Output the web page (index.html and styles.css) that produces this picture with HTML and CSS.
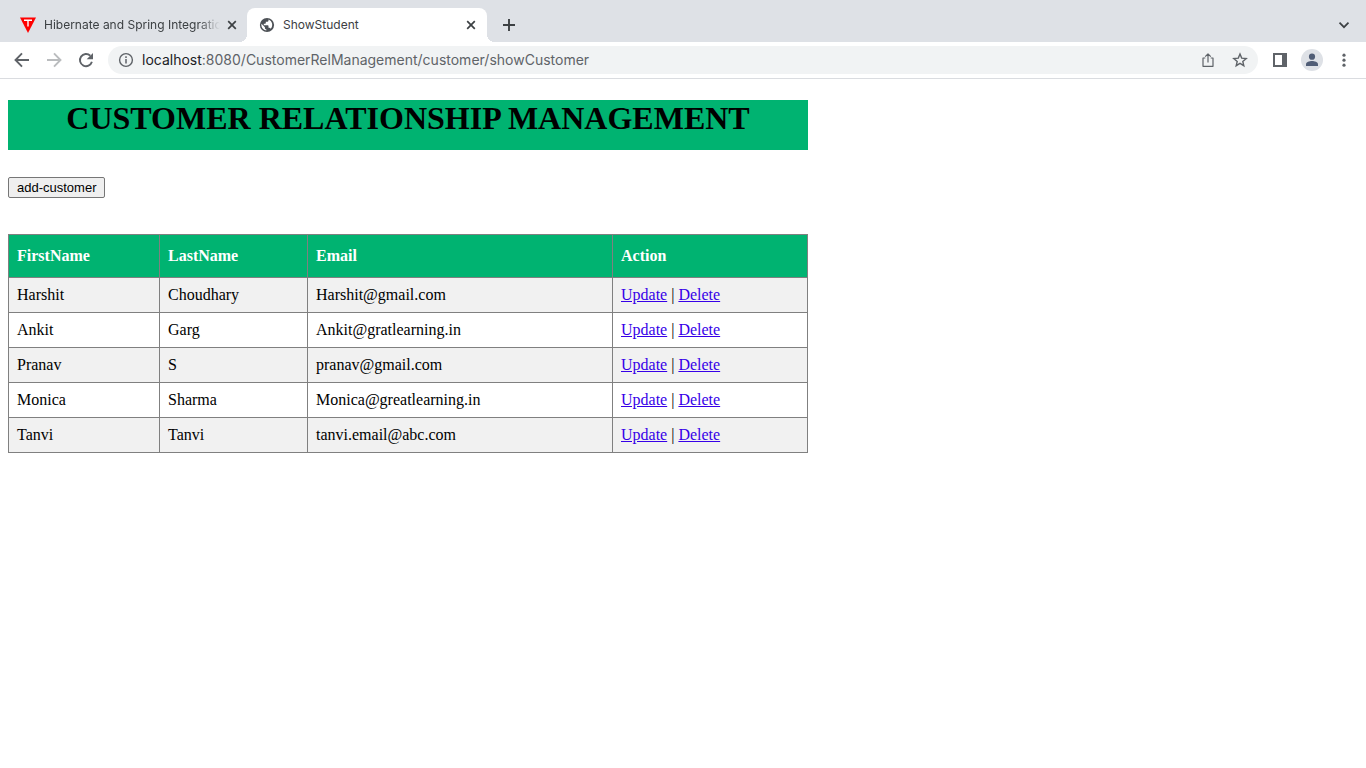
FILE: index.html
```html
<!DOCTYPE html>
<html lang="en">
<head>
<meta charset="utf-8">
<title>ShowStudent</title>
<link rel="stylesheet" href="styles.css">
</head>
<body>
<header class="browser">
  <div class="tabstrip">
    <div class="tab">
      <svg class="favicon" viewBox="0 0 16 16" width="16" height="16"><path d="M0 .5h16L8 16z" fill="#ff0000"/><path d="M4 3.200h8M8 3.200v6.300" stroke="#fff" stroke-width="1.400" fill="none"/></svg>
      <span class="tab-title tab-title-faded">Hibernate and Spring Integration</span>
      <button class="icon-button tab-close" aria-label="Close tab"><svg viewBox="0 0 16 16" width="16" height="16"><path d="M4.200 4.200l7.600 7.600M11.800 4.200l-7.600 7.600" stroke="#3c4043" stroke-width="1.700"/></svg></button>
    </div>
    <div class="tab tab-active">
      <svg class="favicon" viewBox="0 0 16 16" width="16" height="16"><circle cx="8" cy="8" r="7.100" fill="#4d5156"/><path d="M9.500 2.500v.9c0 .8-.7 1.400-1.500 1.400H6.800v1.300c0 .4-.3.700-.7.700H4.800v1.400h4c.4 0 .7.300.7.700v1.900h.7c.7 0 1.200.4 1.400 1A5.700 5.700 0 0 0 9.500 2.500zM7.300 13.600v-1.300c-.8 0-1.400-.6-1.400-1.400v-.7L2.500 6.800A5.700 5.700 0 0 0 7.300 13.600z" fill="#fff"/></svg>
      <span class="tab-title">ShowStudent</span>
      <button class="icon-button tab-close" aria-label="Close tab"><svg viewBox="0 0 16 16" width="16" height="16"><path d="M4.200 4.200l7.600 7.600M11.800 4.200l-7.600 7.600" stroke="#3c4043" stroke-width="1.700"/></svg></button>
    </div>
    <button class="icon-button new-tab" aria-label="New tab"><svg viewBox="0 0 16 16" width="16" height="16"><path d="M8 2v12M2 8h12" stroke="#3c4043" stroke-width="1.900"/></svg></button>
    <button class="icon-button tab-search" aria-label="Search tabs"><svg viewBox="0 0 16 16" width="16" height="16"><path d="M3.500 5.700L8 10.200l4.500-4.500" stroke="#3c4043" stroke-width="1.700" fill="none"/></svg></button>
  </div>
  <div class="toolbar">
    <div class="nav">
      <button class="icon-button" aria-label="Back"><svg viewBox="0 0 16 16" width="16" height="16"><path d="M15 8H2M8 1.300L1.500 8 8 14.700" stroke="#5f6368" stroke-width="1.900" fill="none"/></svg></button>
      <button class="icon-button" aria-label="Forward"><svg viewBox="0 0 16 16" width="16" height="16"><path d="M1 8h13M8 1.300L14.500 8 8 14.700" stroke="#babcbe" stroke-width="1.900" fill="none"/></svg></button>
      <button class="icon-button" aria-label="Reload"><svg viewBox="0 0 16 16" width="16" height="16"><path d="M13.900 9.800A6.100 6.100 0 1 1 12.300 3.700" stroke="#5f6368" stroke-width="1.900" fill="none"/><path d="M15 1v6.300H8.700z" fill="#5f6368"/></svg></button>
    </div>
    <div class="omnibox">
      <button class="icon-button" aria-label="Site information"><svg viewBox="0 0 16 16" width="16" height="16"><circle cx="8" cy="8" r="6.400" stroke="#5f6368" stroke-width="1.400" fill="none"/><path d="M8 7v4.500M8 4.300v1.600" stroke="#5f6368" stroke-width="1.500"/></svg></button>
      <span class="url"><span class="url-host">localhost</span>:8080/CustomerRelManagement/customer/showCustomer</span>
      <button class="icon-button" aria-label="Share"><svg viewBox="0 0 16 16" width="16" height="16"><path d="M5.300 6H3v8.300h10V6h-2.300M8 10.500V2M5.200 4.700L8 1.900l2.800 2.800" stroke="#5f6368" stroke-width="1.200" fill="none" stroke-linejoin="round"/></svg></button>
      <button class="icon-button" aria-label="Bookmark"><svg viewBox="0 0 16 16" width="16" height="16"><path d="M8 2l1.700 4.100 4.500.4-3.400 2.900 1 4.300L8 11.400l-3.800 2.300 1-4.300-3.400-2.900 4.500-.4z" stroke="#5f6368" stroke-width="1.400" fill="none"/></svg></button>
    </div>
    <div class="actions">
      <button class="icon-button" aria-label="Side panel"><svg viewBox="0 0 16 16" width="16" height="16"><path fill-rule="evenodd" d="M1 1h14v14H1zM3 3v10h7V3z" fill="#5f6368"/></svg></button>
      <button class="icon-button profile" aria-label="Profile"><svg viewBox="0 0 16 16" width="16" height="16"><circle cx="8" cy="4.700" r="3.100" fill="#505d76"/><path d="M2 14v-1.800C2 10 5.500 9 8 9s6 1 6 3.200V14z" fill="#505d76"/></svg></button>
      <button class="icon-button" aria-label="Menu"><svg viewBox="0 0 16 16" width="16" height="16"><g fill="#5f6368"><circle cx="8" cy="3.200" r="1.600"/><circle cx="8" cy="8.200" r="1.600"/><circle cx="8" cy="13.200" r="1.600"/></g></svg></button>
    </div>
  </div>
</header>
<main class="page">
  <h1 class="banner">CUSTOMER RELATIONSHIP MANAGEMENT</h1>
  <button class="add-button">add-customer</button>
  <table class="customers">
    <colgroup><col class="col-first"><col class="col-last"><col class="col-email"><col></colgroup>
    <thead><tr><th scope="col">FirstName</th><th scope="col">LastName</th><th scope="col">Email</th><th scope="col">Action</th></tr></thead>
    <tbody>
      <tr><td>Harshit</td><td>Choudhary</td><td>Harshit@gmail.com</td><td><a href="#">Update</a> | <a href="#">Delete</a></td></tr>
      <tr><td>Ankit</td><td>Garg</td><td>Ankit@gratlearning.in</td><td><a href="#">Update</a> | <a href="#">Delete</a></td></tr>
      <tr><td>Pranav</td><td>S</td><td>pranav@gmail.com</td><td><a href="#">Update</a> | <a href="#">Delete</a></td></tr>
      <tr><td>Monica</td><td>Sharma</td><td>Monica@greatlearning.in</td><td><a href="#">Update</a> | <a href="#">Delete</a></td></tr>
      <tr><td>Tanvi</td><td>Tanvi</td><td>tanvi.email@abc.com</td><td><a href="#">Update</a> | <a href="#">Delete</a></td></tr>
    </tbody>
  </table>
</main>
</body>
</html>
```
FILE: styles.css
```css
* { box-sizing: border-box; }
body { margin: 0; background: #fff; color: #000; font: 16px/18px "Liberation Serif", "Times New Roman", serif; }
.browser { border-bottom: 1px solid #dadce0; font-family: Inter, Roboto, sans-serif; }
.icon-button { display: flex; flex: none; align-items: center; justify-content: center; width: 16px; height: 16px; padding: 0; border: 0; background: none; }
.tabstrip { display: flex; height: 42px; padding: 8px 14px 0 8px; background: #dee1e6; }
.tab { display: flex; align-items: center; position: relative; width: 240px; padding: 0 8px 0 12px; gap: 8px; color: #3c4043; font-size: 12px; }
.tab:first-child { width: 239px; padding-right: 7px; gap: 4px; }
.tab:first-child .favicon { margin-right: 4px; }
.tab-active { background: #fff; border-radius: 8px 8px 0 0; }
.tab-active::before, .tab-active::after { content: ""; position: absolute; bottom: 0; width: 8px; height: 8px; }
.tab-active::before { right: 100%; background: radial-gradient(circle at 0 0, transparent 8px, #fff 8px); }
.tab-active::after { left: 100%; background: radial-gradient(circle at 100% 0, transparent 8px, #fff 8px); }
.favicon { flex: none; }
.tab-title { flex: 1; overflow: hidden; white-space: nowrap; }
.tab-title-faded { mask-image: linear-gradient(to right, #000 88%, transparent); }
.new-tab { align-self: center; margin-left: 14px; }
.tab-search { align-self: center; margin-left: auto; }
.toolbar { display: flex; align-items: center; height: 36px; padding: 0 14px; gap: 14px; }
.nav { display: flex; gap: 16px; }
.omnibox { display: flex; flex: 1; align-items: center; gap: 16px; height: 28px; padding: 0 10px; border-radius: 14px; background: #f1f3f4; }
.url { flex: 1; margin-left: -8px; color: #5f6368; font-size: 14px; }
.url-host { color: #202124; }
.actions { display: flex; align-items: center; gap: 13px; }
.profile { width: 22px; height: 22px; border-radius: 50%; background: #dee1e6; }
.page { padding: 21px 8px; }
.banner { max-width: 800px; height: 50px; margin: 0 0 27px; background: #00b371; font-size: 32px; line-height: 37px; text-align: center; }
.add-button { display: block; height: 21px; margin: 0 0 36px; padding: 1px 8px; border: 1px solid #767676; border-radius: 2px; background: #efefef; color: #000; font: 13px "Liberation Sans", Arial, sans-serif; }
.customers { width: 100%; max-width: 800px; border-collapse: collapse; table-layout: fixed; }
.col-first { width: 151px; }
.col-last { width: 148px; }
.col-email { width: 305px; }
.customers th, .customers td { border: 1px solid #808080; padding: 8px; text-align: left; }
.customers th { padding: 12px 8px; background: #00b371; color: #fff; }
.customers tbody tr:nth-child(odd) { background: #f1f1f1; }
.customers a { color: #3600e8; }
```
